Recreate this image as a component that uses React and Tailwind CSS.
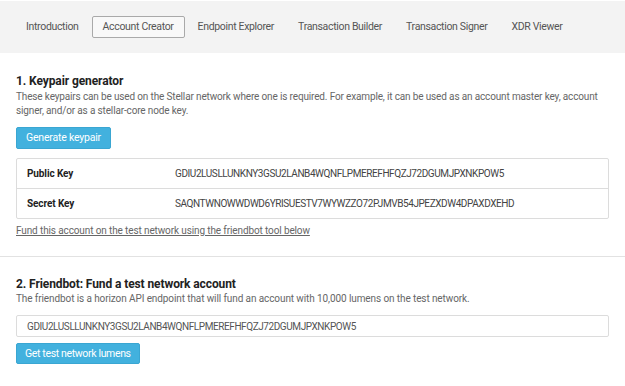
export default function App() {
  const tabs = [
    "Introduction",
    "Account Creator",
    "Endpoint Explorer",
    "Transaction Builder",
    "Transaction Signer",
    "XDR Viewer",
  ];
  const active = "Account Creator";
  const pub = "GDIU2LUSLLUNKNY3GSU2LANB4WQNFLPMEREFHFQZJ72DGUMJPXNKPOW5";
  const sec = "SAQNTWNOWWDWD6YRISUESTV7WYWZZO72PJMVB54JPEZXDW4DPAXDXEHD";

  return (
    <div className="w-[625px] h-[386px] bg-white overflow-hidden font-['Roboto',sans-serif] text-[#333]">
      {/* top nav */}
      <div className="mt-px h-[52px] bg-[#f3f3f3] flex items-center pl-[15px] gap-[2px]">
        {tabs.map((t) => (
          <div
            key={t}
            className={
              t === active
                ? "h-[22px] px-[10px] flex items-center text-[10.5px] tracking-[-0.33px] text-[#555] border border-[#a9a9a9] rounded-[2px] bg-[#f8f8f8]"
                : "h-[22px] px-[11px] flex items-center text-[10.5px] tracking-[-0.33px] text-[#555]"
            }
          >
            {t}
          </div>
        ))}
      </div>

      {/* keypair generator */}
      <div className="px-4 pt-[20px] pb-[18px] border-b border-[#e2e2e2]">
        <h2 className="text-[12px] leading-[17px] font-bold tracking-[-0.1px] text-[#222]">1. Keypair generator</h2>
        <p className="text-[10px] leading-[13.5px] tracking-[-0.15px] text-[#666]">
          These keypairs can be used on the Stellar network where one is required. For example, it can be used as an account master key, account signer, and/or as a stellar-core node key.
        </p>
        <button className="mt-[10px] h-[22px] px-[9px] bg-[#42b1de] text-white text-[10.5px] tracking-[-0.2px] rounded-[2px] border border-[#3aa6d2]">
          Generate keypair
        </button>
        <div className="mt-[9px] border border-[#dcdcdc] rounded-[2px] text-[10px]">
          <div className="h-[30px] flex items-center border-b border-[#dcdcdc]">
            <div className="w-[158px] pl-[10px] font-bold text-[#222] tracking-[-0.1px]">Public Key</div>
            <div className="text-[#444] tracking-[-0.42px]">{pub}</div>
          </div>
          <div className="h-[29px] flex items-center">
            <div className="w-[158px] pl-[10px] font-bold text-[#222] tracking-[-0.1px]">Secret Key</div>
            <div className="text-[#444] tracking-[-0.42px]">{sec}</div>
          </div>
        </div>
        <a className="mt-[5px] block text-[10px] leading-[14px] tracking-[-0.12px] text-[#666] underline">
          Fund this account on the test network using the friendbot tool below
        </a>
      </div>

      {/* friendbot */}
      <div className="px-4 pt-[19px]">
        <h2 className="text-[12px] leading-[16px] font-bold tracking-[-0.1px] text-[#222]">2. Friendbot: Fund a test network account</h2>
        <p className="text-[10px] leading-[14px] tracking-[-0.1px] text-[#666]">
          The friendbot is a horizon API endpoint that will fund an account with 10,000 lumens on the test network.
        </p>
        <div className="mt-[9px] h-[22px] border border-[#dcdcdc] rounded-[2px] flex items-center pl-[10px] text-[10px] tracking-[-0.42px] text-[#555]">
          {pub}
        </div>
        <button className="mt-[6px] h-[21px] px-[8px] bg-[#42b1de] text-white text-[10.5px] tracking-[-0.35px] rounded-[2px] border border-[#3aa6d2]">
          Get test network lumens
        </button>
      </div>
    </div>
  );
}
